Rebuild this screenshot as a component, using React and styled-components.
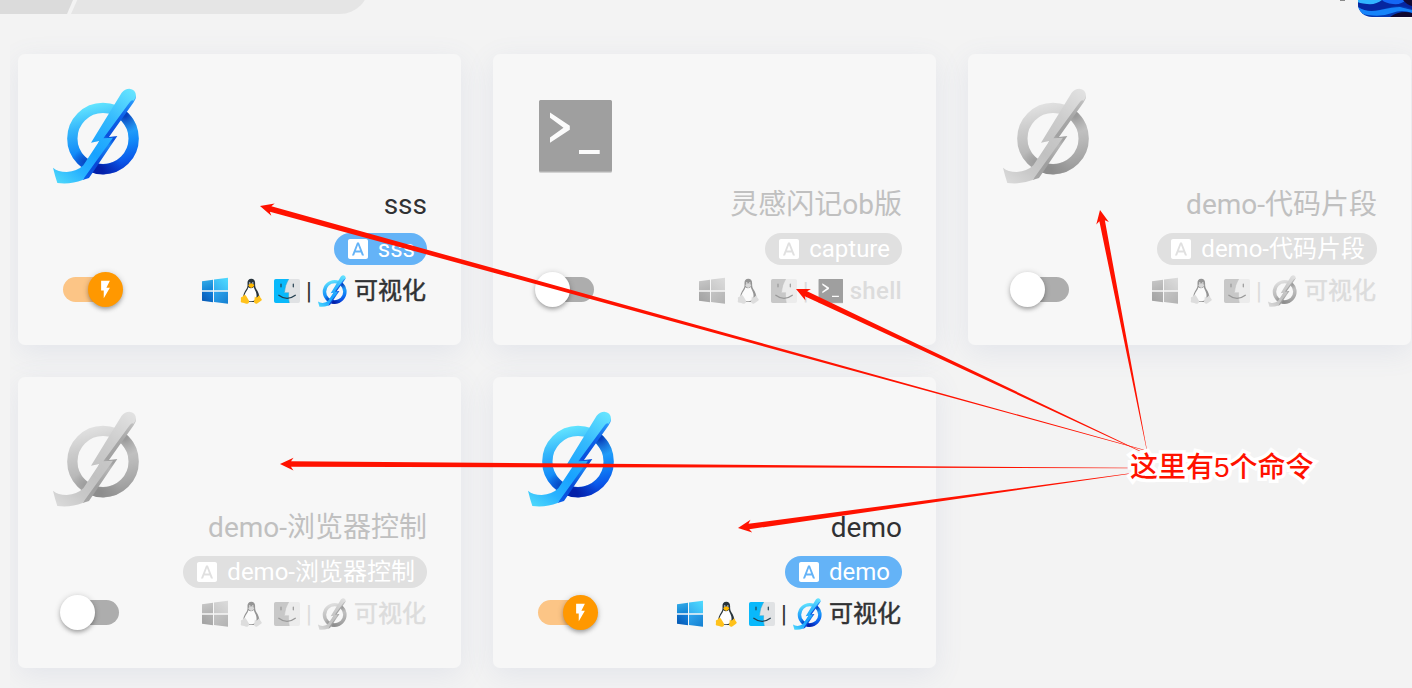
import React from 'react'
import styled, { createGlobalStyle } from 'styled-components'
import { MdFlashOn, MdFontDownload } from 'react-icons/md'

const commands = [
    { name: 'sss', tag: 'sss', type: 'visual', active: true },
    { name: '灵感闪记ob版', tag: 'capture', type: 'shell', active: false },
    { name: 'demo-代码片段', tag: 'demo-代码片段', type: 'visual', active: false },
    { name: 'demo-浏览器控制', tag: 'demo-浏览器控制', type: 'visual', active: false },
    { name: 'demo', tag: 'demo', type: 'visual', active: true },
]

const arrows = [
    { tip: [260, 206], tail: [1144, 450] },
    { tip: [796, 289], tail: [1144, 453] },
    { tip: [1100, 210], tail: [1147, 451] },
    { tip: [280, 464], tail: [1134, 468] },
    { tip: [738, 528], tail: [1134, 473] },
]

// tapered arrow: wide at the head, thin at the tail
const arrowPoints = ({ tip, tail }) => {
    const dx = tail[0] - tip[0]
    const dy = tail[1] - tip[1]
    const len = Math.hypot(dx, dy)
    const ux = dx / len
    const uy = dy / len
    const at = (along, side) =>
        `${tip[0] + ux * along - uy * side},${tip[1] + uy * along + ux * side}`
    return [
        at(0, 0), at(13.5, -6.4), at(11, -2.8), at(len, -0.15),
        at(len, 0.15), at(11, 2.8), at(13.5, 6.4),
    ].join(' ')
}

const Rubick = ({ size }) => {
    const id = React.useId()
    return (
        <Icon width={size} height={size} viewBox="30 24 288 288">
            <defs>
                <linearGradient id={`${id}ring`} gradientUnits="userSpaceOnUse" x1="160" y1="68" x2="212" y2="284">
                    <stop offset="0" stopColor="#66e8ff" />
                    <stop offset="0.3" stopColor="#35b6fb" />
                    <stop offset="0.62" stopColor="#128af8" />
                    <stop offset="0.86" stopColor="#0a58ea" />
                    <stop offset="1" stopColor="#0738cf" />
                </linearGradient>
                <radialGradient id={`${id}top`} gradientUnits="userSpaceOnUse" cx="254" cy="102" r="56">
                    <stop offset="0.15" stopColor="#0640bd" />
                    <stop offset="1" stopColor="#0640bd" stopOpacity="0" />
                </radialGradient>
                <radialGradient id={`${id}low`} gradientUnits="userSpaceOnUse" cx="176" cy="272" r="72">
                    <stop offset="0.15" stopColor="#0420a8" />
                    <stop offset="1" stopColor="#0420a8" stopOpacity="0" />
                </radialGradient>
                <radialGradient id={`${id}left`} gradientUnits="userSpaceOnUse" cx="136" cy="246" r="40">
                    <stop offset="0" stopColor="#0848c0" />
                    <stop offset="1" stopColor="#0848c0" stopOpacity="0" />
                </radialGradient>
                <linearGradient id={`${id}stick`} gradientUnits="userSpaceOnUse" x1="275" y1="30" x2="60" y2="310">
                    <stop offset="0" stopColor="#66e4ff" />
                    <stop offset="0.3" stopColor="#35bafd" />
                    <stop offset="0.62" stopColor="#18a2ff" />
                    <stop offset="0.82" stopColor="#28b2ff" />
                    <stop offset="1" stopColor="#4cd6fb" />
                </linearGradient>
                <linearGradient id={`${id}side`} gradientUnits="userSpaceOnUse" x1="280" y1="60" x2="140" y2="298">
                    <stop offset="0" stopColor="#2b9dfc" />
                    <stop offset="0.2" stopColor="#0d62ea" />
                    <stop offset="0.48" stopColor="#0a4fdc" />
                    <stop offset="0.56" stopColor="#1a86f6" />
                    <stop offset="0.8" stopColor="#0848d6" />
                    <stop offset="1" stopColor="#0a5de8" />
                </linearGradient>
            </defs>
            <circle cx="189" cy="175.500" r="92" fill="none" strokeWidth="31" stroke={`url(#${id}ring)`} />
            <path d="M235 96A92 92 0 0 1 281 175" fill="none" strokeWidth="31" stroke={`url(#${id}top)`} />
            <path d="M281 176A92 92 0 0 1 150 259" fill="none" strokeWidth="31" stroke={`url(#${id}low)`} />
            <path d="M150 259A92 92 0 0 1 98 190" fill="none" strokeWidth="31" stroke={`url(#${id}left)`} />
            <path
                d="M288 48Q288 58 281 67L207 171L232 168L147 294L128 300L160 230L190 150L262 58Z"
                fill={`url(#${id}side)`}
            />
            <path
                d="M245 38Q255 26 268 26Q287 28 288 47Q287 55 281 62Q276 58 268 68L190 175L219 173L128 300Q92 314 52 309Q45 288 39 263Q54 276 80 276Q112 274 130 256L178 183L153 188Z"
                fill={`url(#${id}stick)`}
            />
        </Icon>
    )
}

const Terminal = ({ size }) => (
    <Icon width={size} height={size} viewBox="0 0 96 96">
        <rect x="14" y="12.800" width="73" height="72" rx="1.500" fill="#000" opacity="0.4" />
        <rect x="14" y="12" width="73" height="71.500" rx="1.500" fill="#464646" />
        <path d="M25 24.500L44.800 37.700v4L25 54.800v-5.300L38.500 39.700L25 29.800zM54 62h20.700v4H54z" fill="#fff" />
    </Icon>
)

const Windows = () => {
    const id = React.useId()
    return (
        <Icon width="28" height="28" viewBox="0 0 28 28">
            <linearGradient id={`${id}a`} x1="0" y1="0" x2="0.3" y2="1">
                <stop offset="0" stopColor="#36aee8" />
                <stop offset="1" stopColor="#1688d8" />
            </linearGradient>
            <linearGradient id={`${id}b`} x1="1" y1="0" x2="0" y2="1">
                <stop offset="0" stopColor="#50dcff" />
                <stop offset="1" stopColor="#35aef0" />
            </linearGradient>
            <linearGradient id={`${id}c`} x1="0" y1="1" x2="1" y2="0">
                <stop offset="0" stopColor="#0656b0" />
                <stop offset="1" stopColor="#1180dd" />
            </linearGradient>
            <linearGradient id={`${id}d`} x1="0" y1="0" x2="1" y2="1">
                <stop offset="0" stopColor="#2fa6ee" />
                <stop offset="1" stopColor="#157fd0" />
            </linearGradient>
            <path d="M1 4.200L12 2.700v10.600H1z" fill={`url(#${id}a)`} />
            <path d="M13 2.500L27 0.800v12.500H13z" fill={`url(#${id}b)`} />
            <path d="M1 14.700H12v10.600L1 23.700z" fill={`url(#${id}c)`} />
            <path d="M13 14.700H27v12.100L13 25.100z" fill={`url(#${id}d)`} />
        </Icon>
    )
}

const Linux = () => (
    <Icon width="28" height="28" viewBox="0 0 28 28">
        <path
            d="M14.300 1.800c-2.600 0-3.900 1.800-3.800 4.300.1 2.900.1 4.100-1.300 6.200-1.900 2.900-3.300 6-3 8.900.2 2.500 2.500 3.900 8.200 3.900s8-1.600 8-4.300c0-2.900-1.100-5.900-3-8.600-1.300-2-1.300-3.400-1.300-6.100 0-2.600-1.200-4.300-3.800-4.300z"
            fill="#28343c"
        />
        <path d="M11.400 10.300q2.800 1.900 5.400-.4c.3 2 2 4 2.500 6.500.7 3.200.2 7.600-5 7.900-5 .2-7.600-2.600-6.600-6.600.7-2.600 3.100-4.800 3.700-7.400z" fill="#fff" />
        <path d="M11.200 8.300q1.200-2 3-2t3.100 1.800q.2 1.500-3 2.900-2.300-.6-3.100-2.700z" fill="#ffb800" />
        <ellipse cx="12.700" cy="5.900" rx="0.800" ry="1" fill="#a7afb3" />
        <ellipse cx="15.800" cy="5.900" rx="0.800" ry="1" fill="#a7afb3" />
        <path
            d="M6.900 17.800q1.500-.7 2.600 1.600l2.400 4q.8 2.500-1.500 3.300-1.500.4-3.300-.6l-2.600-.7q-1.200-.4-.6-2 .2-1.300-.1-2.300 0-1.300 1.500-1.400 1.300-.2 1.600-1.900z"
            fill="#ffc21c"
        />
        <path
            d="M17.800 19.500q1.800 2.200 4-1 1.400.2 1.500 2l1.200 1.600q.8 1.200-.8 2l-3.100 2.100q-2.200 1.300-3.400-.6-.5-1.500.3-3.200z"
            fill="#ffc21c"
        />
    </Icon>
)

const Finder = () => (
    <Icon width="28" height="28" viewBox="0 0 28 28">
        <path d="M2.800 2h13.500l-4 12h4.200l.3 12h-14Q1 26 1 24.200V3.800Q1 2 2.800 2z" fill="#09b9fb" />
        <path d="M15.700 2h9.500q1.800 0 1.800 1.800v20.400q0 1.800-1.800 1.800h-8.900q-1-3.400-.8-7.500l.1-2.500h-4.200Q12 8 15.700 2z" fill="#e0e2e4" />
        <path d="M15.700 2Q12 8 11.400 15.500h4.200q-.5 5.500.7 10.500" fill="none" stroke="#20a3d0" strokeWidth="0.500" />
        <path d="M8 7v2.800M20.300 7v2.800" stroke="#254050" strokeWidth="1.200" strokeLinecap="round" />
        <path d="M5.800 18.300Q14 24.600 22.300 18.300" fill="none" stroke="#254050" strokeWidth="1.300" strokeLinecap="round" />
    </Icon>
)

const TypeIcon = ({ type, size }) => (type === 'shell' ? <Terminal size={size} /> : <Rubick size={size} />)

const CommandCard = ({ command }) => {
    const { name, tag, type, active } = command
    return (
        <Card>
            <Logo $active={active}>
                <TypeIcon type={type} size={96} />
            </Logo>
            <CardFooter>
                <Toggle $active={active}>
                    <Thumb $active={active}>{active && <MdFlashOn />}</Thumb>
                </Toggle>
                <Info>
                    <Name $active={active}>{name}</Name>
                    <Chip $active={active}>
                        <MdFontDownload />
                        <span>{tag}</span>
                    </Chip>
                    <Meta $active={active}>
                        <Platforms $active={active}>
                            <Windows />
                            <Linux />
                            <Finder />
                        </Platforms>
                        <Separator>|</Separator>
                        <SmallLogo $active={active}>
                            <TypeIcon type={type} size={32} />
                        </SmallLogo>
                        {type === 'shell' ? <ShellLabel>shell</ShellLabel> : <VisualLabel>可视化</VisualLabel>}
                    </Meta>
                </Info>
            </CardFooter>
        </Card>
    )
}

const App = () => {
    return (
        <Page>
            <GlobalStyle />
            <Header>
                <Crumbs>
                    <FirstCrumb />
                    <LastCrumb />
                </Crumbs>
                <User>
                    <UserName />
                    <Avatar viewBox="0 0 54 17" preserveAspectRatio="none">
                        <rect width="54" height="18" fill="#0538b0" />
                        <path d="M0 0h54v9Q43 4 33 7T12 11Q5 11 0 7z" fill="#0626a0" />
                        <path d="M0 0h24Q18 5 9 4T0 2z" fill="#31b4ff" />
                        <path d="M24 0h24q-5 5-13 4T24 0z" fill="#1467f5" />
                        <path d="M0 7Q9 13 22 10t20-3l12 3v3q-10-4-20 0T10 15Q3 14 0 11z" fill="#1684fa" />
                        <path d="M32 17q10-7 22-4v5H32z" fill="#10072f" />
                        <path d="M45 0h9v6q-5-1-9-6z" fill="#120a35" />
                    </Avatar>
                </User>
            </Header>
            <Content>
                {commands.map((command) => (
                    <CommandCard key={command.name} command={command} />
                ))}
            </Content>
            <Arrows viewBox="0 0 1412 688">
                {arrows.map((arrow) => (
                    <polygon key={arrow.tip.join()} points={arrowPoints(arrow)} />
                ))}
            </Arrows>
            <Note>这里有5个命令</Note>
        </Page>
    )
}

export default App


const GlobalStyle = createGlobalStyle`
    * {
        box-sizing: border-box;
    }
    body {
        margin: 0;
        overflow: hidden;
        background: #f3f3f3;
        font-family: Roboto, "Noto Sans CJK SC", sans-serif;
    }
`

const Page = styled.div`
    position: relative;
    display: flex;
    flex-direction: column;
    width: 1412px;
    height: 688px;
    overflow: hidden;
    background: #f3f3f3;
`

const Header = styled.header`
    display: flex;
    justify-content: space-between;
    align-items: flex-start;
    height: 18px;
`

const Crumbs = styled.div`
    display: flex;
    align-items: flex-end;
    width: 369px;
    height: 14px;
    overflow: hidden;
`

const FirstCrumb = styled.div`
    flex: none;
    width: 73px;
    height: 14px;
    background: #dbdbdb;
    clip-path: polygon(0 0, 100% 0, 67px 100%, 0 100%);
`

const LastCrumb = styled.div`
    flex: none;
    width: 298px;
    height: 58px;
    margin-left: -2px;
    background: #e5e5e5;
    border-radius: 0 0 29px 0;
    clip-path: polygon(26px 0, 100% 0, 100% 100%, 0 100%);
`

const User = styled.div`
    display: flex;
    align-items: flex-start;
`

const UserName = styled.div`
    width: 5px;
    height: 1px;
    margin-right: 13px;
    background: #8a8a8a;
`

const Avatar = styled.svg`
    display: block;
    width: 54px;
    height: 18px;
    border-bottom: 1px solid #fafafa;
    border-radius: 0 0 0 14px;
`

const Content = styled.main`
    display: grid;
    grid-template-columns: repeat(3, 443px);
    grid-auto-rows: 291px;
    gap: 32px;
    flex: 1;
    margin-left: 10px;
    padding: 36px 0 0 8px;
    overflow: hidden;
`

const Card = styled.section`
    display: flex;
    flex-direction: column;
    justify-content: space-between;
    padding: 34px 34px 38px 32px;
    background: #f7f7f7;
    border-radius: 7px;
    box-shadow: 0 7px 29px 0 rgba(100, 115, 172, 0.11);
`

const Icon = styled.svg`
    display: block;
    flex: none;
`

const Logo = styled.div`
    width: 96px;
    height: 96px;
    filter: ${(props) => (props.$active ? 'none' : 'grayscale(1) opacity(0.5)')};
`

const CardFooter = styled.div`
    display: flex;
    justify-content: space-between;
    align-items: flex-end;
`

const Toggle = styled.div`
    position: relative;
    flex: none;
    width: 56px;
    height: 25px;
    margin: 0 0 5px 13px;
    border-radius: 13px;
    background: ${(props) => (props.$active ? '#fcc586' : '#adadad')};
`

const Thumb = styled.div`
    position: absolute;
    top: -5px;
    left: ${(props) => (props.$active ? '25px' : '-3px')};
    display: flex;
    align-items: center;
    justify-content: center;
    width: 35px;
    height: 35px;
    border-radius: 50%;
    color: #fff;
    font-size: 21px;
    background: ${(props) => (props.$active ? '#ff9800' : '#fff')};
    box-shadow: 0 3px 4px -1px rgba(0, 0, 0, 0.25), 0 1px 6px rgba(0, 0, 0, 0.2);
`

const Info = styled.div`
    display: flex;
    flex-direction: column;
    align-items: flex-end;
    white-space: nowrap;
`

const Name = styled.div`
    height: 32px;
    margin-bottom: 12px;
    font-size: 28px;
    line-height: 32px;
    color: ${(props) => (props.$active ? '#303133' : '#c0c0c0')};
`

const Chip = styled.div`
    display: flex;
    align-items: center;
    gap: 8px;
    height: 32px;
    margin-bottom: 10px;
    padding: 0 12px;
    border-radius: 16px;
    font-size: 24px;
    line-height: 32px;
    color: #fff;
    background: ${(props) => (props.$active ? '#64b3f7' : '#e0e0e0')};
`

const Meta = styled.div`
    display: flex;
    align-items: center;
    height: 32px;
    font-size: 24px;
    line-height: 32px;
    color: ${(props) => (props.$active ? '#303133' : '#dcdcdc')};
`

const Platforms = styled.div`
    display: flex;
    gap: 8px;
    filter: ${(props) => (props.$active ? 'none' : 'grayscale(1) opacity(0.5)')};
`

const Separator = styled.span`
    width: 16px;
    text-align: center;
`

const SmallLogo = styled.div`
    filter: ${(props) => (props.$active ? 'none' : 'grayscale(1) opacity(0.5)')};
`

const ShellLabel = styled.span`
    margin-left: 4px;
    font-weight: 500;
    letter-spacing: 0.3px;
`

const VisualLabel = styled.span`
    margin: 0 1px 0 5px;
    -webkit-text-stroke: 0.5px currentColor;
`

const Arrows = styled.svg`
    position: absolute;
    inset: 0;
    width: 1412px;
    height: 688px;
    fill: #ff1200;
`

const Note = styled.div`
    position: absolute;
    top: 448px;
    left: 1130px;
    font-family: "Liberation Sans", "Noto Sans CJK SC", sans-serif;
    font-size: 28px;
    font-weight: 500;
    line-height: 40px;
    white-space: nowrap;
    color: #ff1200;
    -webkit-text-stroke: 7px #fff;
    paint-order: stroke fill;
    stroke-linejoin: round;
`
